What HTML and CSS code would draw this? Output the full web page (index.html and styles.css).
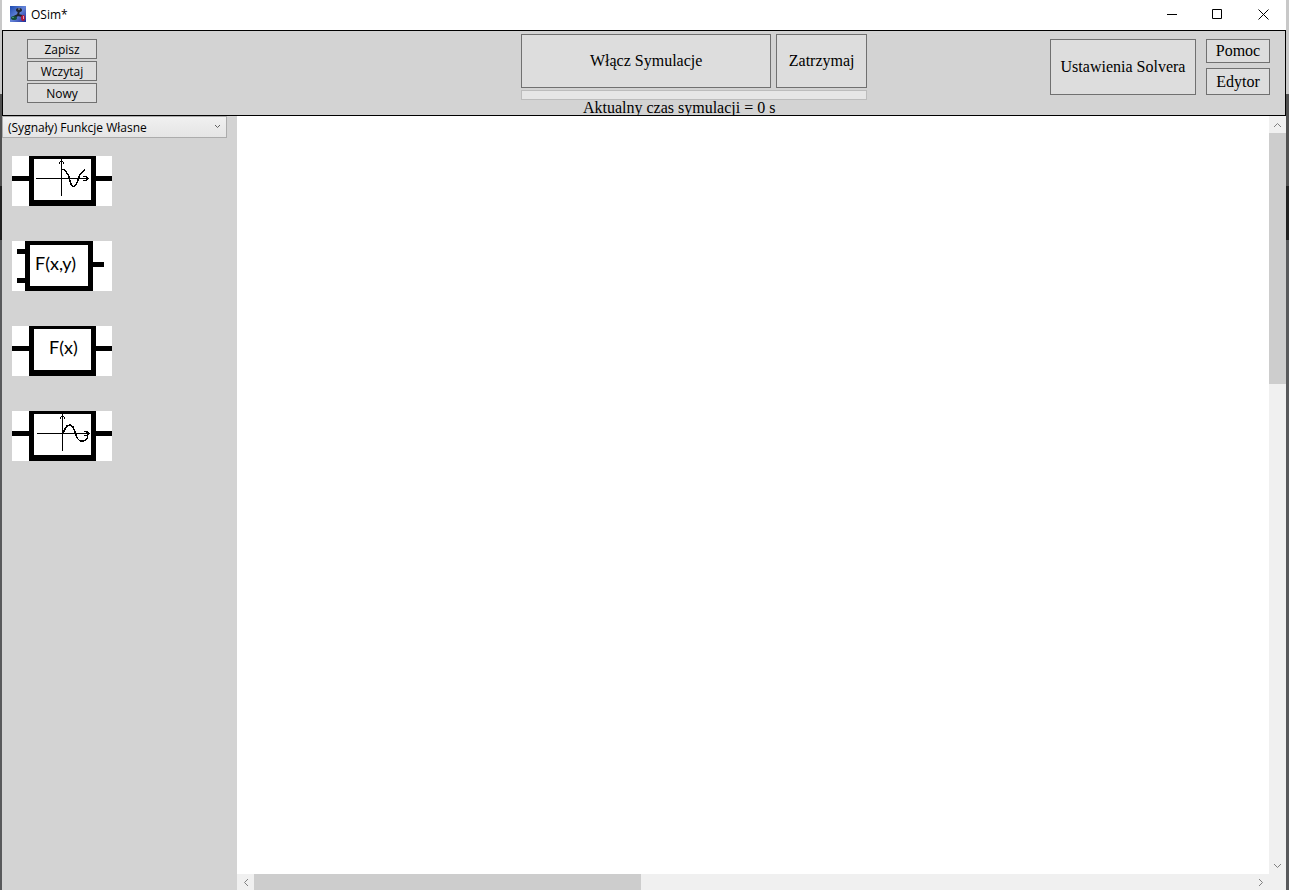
FILE: index.html
```html
<!DOCTYPE html>
<html lang="pl">
<head>
  <meta charset="UTF-8" />
  <meta name="viewport" content="width=device-width, initial-scale=1" />
  <title>OSim*</title>
  <link rel="stylesheet" href="styles.css">
</head>
<body>
  <div class="window">
    <header class="titlebar">
      <svg class="app-icon" viewBox="0 0 16 16" aria-hidden="true">
        <defs>
          <linearGradient id="sky" x1="0" y1="0" x2="1" y2="1">
            <stop offset="0" stop-color="#1c4ab0" />
            <stop offset="0.5" stop-color="#6484d8" />
            <stop offset="1" stop-color="#1c2c98" />
          </linearGradient>
        </defs>
        <rect width="16" height="16" fill="url(#sky)" />
        <path d="M9 5L8 9L4 11M8 9L12 10" fill="none" stroke="#20242c" stroke-width="2" />
        <ellipse cx="9" cy="4" rx="3" ry="2" fill="#20242c" />
        <path d="M8 3h2" stroke="#a0a8b4" />
        <ellipse cx="4" cy="12" rx="3" ry="2" fill="#14503c" />
        <path d="M2 11.5h2" stroke="#489070" />
        <ellipse cx="13" cy="12" rx="2" ry="3" fill="#b01838" />
        <path d="M13.5 10v3" stroke="#e89cac" />
      </svg>
      <span class="title">OSim*</span>
      <button class="caption-btn" aria-label="Minimalizuj">
        <svg viewBox="0 0 11 11"><path d="M1 5.5h10" /></svg>
      </button>
      <button class="caption-btn" aria-label="Maksymalizuj">
        <svg viewBox="0 0 11 11"><path d="M0.5 0.5h9v9h-9z" /></svg>
      </button>
      <button class="caption-btn" aria-label="Zamknij">
        <svg viewBox="0 0 11 11"><path d="M0.5 0.5l10 10M10.5 0.5l-10 10" /></svg>
      </button>
    </header>

    <div class="toolbar">
      <div class="file-actions">
        <button class="btn small">Zapisz</button>
        <button class="btn small">Wczytaj</button>
        <button class="btn small">Nowy</button>
      </div>

      <div class="simulation">
        <div class="sim-buttons">
          <button class="btn start">Włącz Symulacje</button>
          <button class="btn stop">Zatrzymaj</button>
        </div>
        <progress class="sim-progress" value="0" max="100" aria-labelledby="simTime"></progress>
        <div id="simTime" class="sim-time">Aktualny czas symulacji = 0 s</div>
      </div>

      <div class="settings">
        <button class="btn solver">Ustawienia Solvera</button>
        <div class="side-buttons">
          <button class="btn help">Pomoc</button>
          <button class="btn editor">Edytor</button>
        </div>
      </div>
    </div>

    <div class="workspace">
      <aside class="palette">
        <div class="category">
          <select aria-label="Kategoria">
            <option>(Sygnały) Funkcje Własne</option>
          </select>
          <svg class="chevron" viewBox="0 0 7 5" aria-hidden="true"><path d="M1 1l2.5 2.5L6 1" /></svg>
        </div>

        <div class="blocks">
          <button class="block" aria-label="Cosinus">
            <svg viewBox="0 0 100 50">
              <path class="wire" d="M0 20h17v5H0zM84 20h16v5H84z" />
              <path class="frame" d="M17 0h67v50H17zM22 3v41h57V3z" />
              <path class="plot" d="M24 22.5h52M49.5 3v37M47 7.5l2.5-3l2.5 3M71 20.5h3l2 2l-2 2h-3" />
              <path class="plot curve" d="M50 13.5h2.5l4 6l2 7l1 3l2 1l2-1l2-4l2-6l3-4l2.5-2" />
            </svg>
          </button>
          <button class="block" aria-label="Funkcja dwóch zmiennych">
            <svg viewBox="0 0 100 50">
              <path class="wire" d="M5 8h8v5H5zM5 37h8v5H5zM81 21h11v5H81z" />
              <path class="frame" d="M13 0h68v50H13zM18 4v41h58V4z" />
              <text x="23" y="29">F(x,y)</text>
            </svg>
          </button>
          <button class="block" aria-label="Funkcja jednej zmiennej">
            <svg viewBox="0 0 100 50">
              <path class="wire" d="M0 20h17v5H0zM84 20h16v5H84z" />
              <path class="frame" d="M17 0h67v50H17zM22 3v41h57V3z" />
              <text x="37" y="28">F(x)</text>
            </svg>
          </button>
          <button class="block" aria-label="Sinus">
            <svg viewBox="0 0 100 50">
              <path class="wire" d="M0 20h17v5H0zM84 20h16v5H84z" />
              <path class="frame" d="M17 0h67v50H17zM22 3v41h57V3z" />
              <path class="plot" d="M25 22.5h52M50.5 3v37M48 7.5l2.5-3l2.5 3M72 20.5h3l2 2l-2 2h-3" />
              <path class="plot curve" d="M51 22l2-4l2-3l3-1l3 2l2 5l2 6l3 3h4l3-2l1-5l-1-2" />
            </svg>
          </button>
        </div>
      </aside>

      <main class="canvas" aria-label="Schemat"></main>

      <div class="scrollbar vertical">
        <button class="arrow" aria-label="W górę"><svg viewBox="0 0 9 6"><path d="M1 5l3.5-3.5L8 5" /></svg></button>
        <div class="track"><div class="thumb"></div></div>
        <button class="arrow" aria-label="W dół"><svg viewBox="0 0 9 6"><path d="M1 1l3.5 3.5L8 1" /></svg></button>
      </div>
      <div class="scrollbar horizontal">
        <button class="arrow" aria-label="W lewo"><svg viewBox="0 0 6 9"><path d="M5 1L1.5 4.5L5 8" /></svg></button>
        <div class="track"><div class="thumb"></div></div>
        <button class="arrow" aria-label="W prawo"><svg viewBox="0 0 6 9"><path d="M1 1l3.5 3.5L1 8" /></svg></button>
      </div>
      <div class="corner"></div>
    </div>
  </div>
</body>
</html>
```
FILE: styles.css
```css
/* Reset */
*, *::before, *::after {
  box-sizing: border-box;
}

body {
  margin: 0;
  height: 100vh;
  padding: 0 3px 0 2px;
  background: linear-gradient(#c8c8c8 0 94px, #505050 94px 186px, #202020 186px 240px, #58595b 240px);
  font-family: "Open Sans", sans-serif;
  font-size: 12px;
  color: #000;
}

button {
  margin: 0;
  padding: 0;
  border: none;
  background: none;
  color: inherit;
  font: inherit;
}

svg {
  display: block;
}

.window {
  display: flex;
  flex-direction: column;
  height: 100%;
  background: #fff;
}

/* Title bar */
.titlebar {
  display: flex;
  align-items: center;
  height: 30px;
  padding-left: 8px;
}

.app-icon {
  width: 16px;
  height: 16px;
  margin-bottom: 2px;
}

.title {
  flex: 1;
  margin-left: 5px;
  padding-bottom: 2px;
  font-size: 12px;
}

.caption-btn {
  display: flex;
  justify-content: center;
  align-items: center;
  width: 46px;
  height: 29px;
  align-self: flex-start;
}

.caption-btn svg {
  width: 11px;
  height: 11px;
  fill: none;
  stroke: #000;
}

/* Toolbar */
.toolbar {
  display: grid;
  grid-template-columns: 31fr auto 25fr;
  align-items: start;
  height: 86px;
  border: 1px solid #000;
  background: #d3d3d3;
  overflow: hidden;
}

.btn {
  border: 1px solid #707070;
  background: #ddd;
  font-family: "Liberation Serif", serif;
  font-size: 16px;
}

.file-actions {
  display: flex;
  flex-direction: column;
  gap: 2px;
  width: 70px;
  margin: 8px 0 0 24px;
}

.btn.small {
  height: 20px;
  padding-top: 2px;
  font-family: "Open Sans", sans-serif;
  font-size: 12px;
  line-height: 16px;
}

.simulation {
  padding-top: 3px;
}

.sim-buttons {
  display: flex;
  gap: 5px;
  height: 54px;
}

.start {
  width: 250px;
}

.stop {
  width: 91px;
}

.sim-progress {
  display: block;
  width: 100%;
  height: 10px;
  margin-top: 2px;
  appearance: none;
  border: 1px solid #bcbcbc;
  background: #e6e6e6;
}

.sim-progress::-webkit-progress-bar {
  background: #e6e6e6;
}

.sim-progress::-webkit-progress-value {
  background: #06b025;
}

.sim-time {
  padding-right: 30px;
  font-family: "Liberation Serif", serif;
  font-size: 16px;
  line-height: 16px;
  text-align: center;
}

.settings {
  display: flex;
  justify-content: flex-end;
  gap: 10px;
  margin: 8px 15px 0 0;
}

.solver {
  width: 146px;
  height: 56px;
}

.side-buttons {
  display: flex;
  flex-direction: column;
  gap: 5px;
  width: 64px;
}

.help {
  height: 24px;
}

.editor {
  height: 27px;
}

/* Workspace */
.workspace {
  flex: 1;
  display: grid;
  grid-template-columns: 235px 1fr 17px;
  grid-template-rows: 1fr 16px;
  min-height: 0;
}

.palette {
  grid-row: 1 / 3;
  background: #d3d3d3;
}

.category {
  position: relative;
  width: 225px;
}

.category select {
  display: block;
  width: 100%;
  height: 22px;
  padding: 0 20px 0 5px;
  appearance: none;
  border: 1px solid #acacac;
  border-radius: 0;
  background: linear-gradient(#f0f0f0, #e5e5e5);
  color: #000;
  font-family: inherit;
  font-size: 12px;
}

.chevron {
  position: absolute;
  top: 8px;
  right: 6px;
  width: 7px;
  height: 5px;
  fill: none;
  stroke: #606060;
  pointer-events: none;
}

.blocks {
  display: flex;
  flex-direction: column;
  gap: 35px;
  padding: 18px 10px;
}

.block {
  width: 100px;
  height: 50px;
  background: #fff;
}

.block .frame {
  fill-rule: evenodd;
}

.block .plot {
  fill: none;
  stroke: #000;
  shape-rendering: crispEdges;
}

.block .curve {
  stroke-width: 1.4;
}

.block text {
  font-family: Lato, sans-serif;
  font-size: 18px;
}

/* Scrollbars */
.canvas {
  background: #fff;
}

.scrollbar {
  display: flex;
  background: #f0f0f0;
}

.vertical {
  flex-direction: column;
}

.arrow {
  display: flex;
  flex: 0 0 17px;
  justify-content: center;
  align-items: center;
}

.arrow svg {
  width: 9px;
  height: 6px;
  fill: none;
  stroke: #808080;
}

.horizontal .arrow svg {
  width: 6px;
  height: 9px;
}

.track {
  flex: 1;
}

.thumb {
  background: #cdcdcd;
}

.vertical .thumb {
  height: 34.7%;
}

.horizontal .thumb {
  width: 38.8%;
  height: 100%;
}

.corner {
  background: #f0f0f0;
}
```
